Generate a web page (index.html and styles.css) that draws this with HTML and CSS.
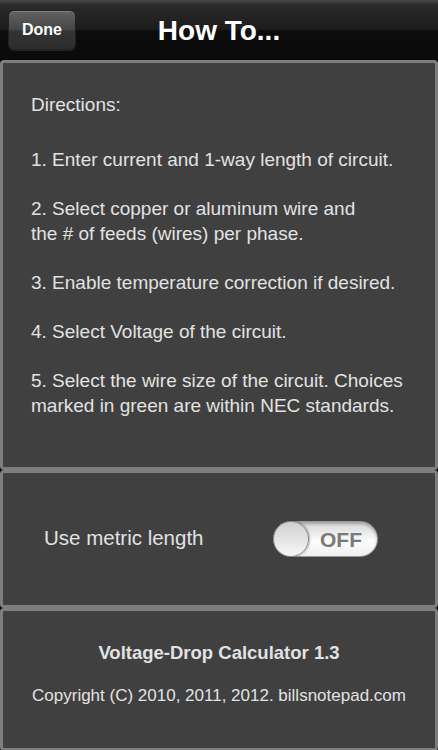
FILE: index.html
```html
<!DOCTYPE html>
<html lang="en">
<head>
  <meta charset="UTF-8" />
  <meta name="viewport" content="width=device-width, initial-scale=1" />
  <title>How To...</title>
  <link rel="stylesheet" href="styles.css">
</head>
<body>
  <div class="navbar">
    <button class="done-btn">Done</button>
    <h1>How To...</h1>
  </div>

  <div class="panel directions">
    <p class="intro">Directions:</p>
    <p>1. Enter current and 1-way length of circuit.</p>
    <p>2. Select copper or aluminum wire and<br>the # of feeds (wires) per phase.</p>
    <p>3. Enable temperature correction if desired.</p>
    <p>4. Select Voltage of the circuit.</p>
    <p>5. Select the wire size of the circuit. Choices<br>marked in green are within NEC standards.</p>
  </div>

  <div class="panel settings">
    <span class="label">Use metric length</span>
    <div class="toggle">
      <span class="knob"></span>
      <span class="toggle-text">OFF</span>
    </div>
  </div>

  <div class="panel about">
    <div class="app-name">Voltage-Drop Calculator 1.3</div>
    <div class="copyright">Copyright (C) 2010, 2011, 2012. billsnotepad.com</div>
  </div>
</body>
</html>
```

FILE: styles.css
```css
* {
  box-sizing: border-box;
}

html, body {
  margin: 0;
  padding: 0;
  background: #000;
}

body {
  width: 438px;
  height: 750px;
  overflow: hidden;
  font-family: "Liberation Sans", Arial, sans-serif;
  color: #e2e2e2;
}

.navbar {
  position: relative;
  height: 60px;
  background: linear-gradient(#4a4a4a 0%, #2a2a2a 8%, #1d1d1d 48%, #0c0c0c 52%, #0a0a0a 100%);
  display: flex;
  align-items: center;
  justify-content: center;
}

.navbar h1 {
  margin: 2px 0 0 0;
  color: #fff;
  font-size: 28px;
  font-weight: bold;
}

.done-btn {
  position: absolute;
  left: 8px;
  top: 10px;
  width: 68px;
  height: 40px;
  border: 1px solid #222;
  border-radius: 6px;
  background: linear-gradient(#626262 0%, #454545 50%, #333 52%, #2e2e2e 100%);
  box-shadow: inset 0 1px 0 rgba(255, 255, 255, 0.2), 0 1px 0 rgba(255, 255, 255, 0.1);
  color: #fff;
  font-family: "Liberation Sans", Arial, sans-serif;
  font-size: 16px;
  font-weight: bold;
  padding: 0;
}

.panel {
  background: #404040;
  border: 3px solid #7e7e7e;
  border-radius: 4px;
}

.directions {
  height: 410px;
  padding: 29px 10px 0 28px;
  font-size: 19px;
  line-height: 25px;
}

.directions p {
  margin: 0 0 24px 0;
  white-space: nowrap;
}

.directions .intro {
  margin-bottom: 30px;
}

.settings {
  height: 138px;
  display: flex;
  align-items: center;
  padding: 0 0 3px 41px;
}

.label {
  font-size: 20.5px;
  width: 229px;
}

.toggle {
  position: relative;
  width: 105px;
  height: 36px;
  margin-top: 2px;
  border-radius: 18px;
  background: linear-gradient(#d6d6d6 0%, #f4f4f4 45%, #fdfdfd 55%, #f0f0f0 100%);
  border: 1px solid #9a9a9a;
  box-shadow: inset 0 2px 3px rgba(0, 0, 0, 0.25);
}

.knob {
  position: absolute;
  left: -1px;
  top: -1px;
  width: 36px;
  height: 36px;
  border-radius: 50%;
  background: linear-gradient(#d0d0d0, #f8f8f8);
  border: 1px solid #8a8a8a;
  box-shadow: 1px 0 2px rgba(0, 0, 0, 0.3);
}

.toggle-text {
  position: absolute;
  left: 46px;
  top: 6px;
  font-size: 21px;
  font-weight: bold;
  color: #7a7a7a;
}

.about {
  height: 143px;
  text-align: center;
  padding-top: 31px;
}

.app-name {
  font-size: 18.5px;
  font-weight: bold;
  margin-bottom: 22px;
}

.copyright {
  font-size: 17px;
}
```
